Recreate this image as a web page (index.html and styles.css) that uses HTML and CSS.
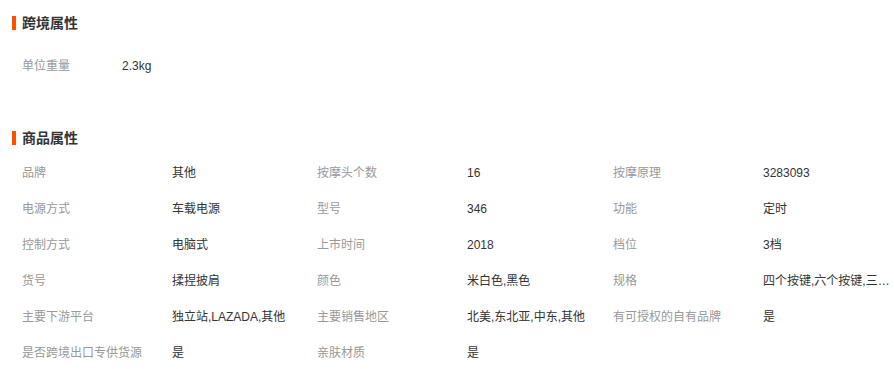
FILE: index.html
```html
<!DOCTYPE html>
<html lang="zh-CN">
<head>
<meta charset="utf-8">
<title>属性</title>
<link rel="stylesheet" href="styles.css">
</head>
<body>
<div class="page">
  <section class="block block-cross">
    <h2 class="block-title">跨境属性</h2>
    <div class="simple-list">
      <div class="attr attr-simple">
        <span class="attr-label">单位重量</span>
        <span class="attr-value">2.3kg</span>
      </div>
    </div>
  </section>
  <section class="block block-goods">
    <h2 class="block-title">商品属性</h2>
    <div class="attr-grid">
      <div class="attr"><span class="attr-label">品牌</span><span class="attr-value">其他</span></div>
      <div class="attr"><span class="attr-label">按摩头个数</span><span class="attr-value">16</span></div>
      <div class="attr"><span class="attr-label">按摩原理</span><span class="attr-value">3283093</span></div>
      <div class="attr"><span class="attr-label">电源方式</span><span class="attr-value">车载电源</span></div>
      <div class="attr"><span class="attr-label">型号</span><span class="attr-value">346</span></div>
      <div class="attr"><span class="attr-label">功能</span><span class="attr-value">定时</span></div>
      <div class="attr"><span class="attr-label">控制方式</span><span class="attr-value">电脑式</span></div>
      <div class="attr"><span class="attr-label">上市时间</span><span class="attr-value">2018</span></div>
      <div class="attr"><span class="attr-label">档位</span><span class="attr-value">3档</span></div>
      <div class="attr"><span class="attr-label">货号</span><span class="attr-value">揉捏披肩</span></div>
      <div class="attr"><span class="attr-label">颜色</span><span class="attr-value">米白色,黑色</span></div>
      <div class="attr"><span class="attr-label">规格</span><span class="attr-value">四个按键,六个按键,三个按键</span></div>
      <div class="attr"><span class="attr-label">主要下游平台</span><span class="attr-value">独立站,LAZADA,其他</span></div>
      <div class="attr"><span class="attr-label">主要销售地区</span><span class="attr-value">北美,东北亚,中东,其他</span></div>
      <div class="attr"><span class="attr-label">有可授权的自有品牌</span><span class="attr-value">是</span></div>
      <div class="attr"><span class="attr-label">是否跨境出口专供货源</span><span class="attr-value">是</span></div>
      <div class="attr"><span class="attr-label">亲肤材质</span><span class="attr-value">是</span></div>
    </div>
  </section>
</div>
</body>
</html>
```
FILE: styles.css
```css
html, body {
  margin: 0;
  padding: 0;
  background: #fff;
}
body {
  font-family: "Liberation Sans", "Noto Sans CJK SC", sans-serif;
  font-size: 12px;
  color: #333;
}
.page {
  width: 892px;
}
.block-title {
  margin: 0 0 0 12px;
  padding-left: 6px;
  border-left: 4px solid #ff5000;
  height: 14px;
  line-height: 14px;
  font-size: 14px;
  font-weight: bold;
  color: #333;
}
.block-cross {
  padding-top: 16px;
}
.block-goods {
  padding-top: 47px;
}
.simple-list {
  margin-top: 18px;
}
.attr-grid {
  margin-top: 10px;
  display: grid;
  grid-template-columns: 295px 296px 1fr;
}
.attr {
  display: flex;
  height: 36px;
  line-height: 36px;
  min-width: 0;
}
.attr-label {
  flex: none;
  width: 172px;
  padding-left: 22px;
  box-sizing: border-box;
  color: #999;
  white-space: nowrap;
}
.attr-simple .attr-label {
  width: 122px;
}
.attr-value {
  flex: 1;
  min-width: 0;
  white-space: nowrap;
  overflow: hidden;
  text-overflow: ellipsis;
  color: #333;
}
```
